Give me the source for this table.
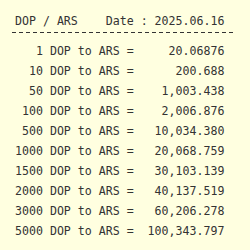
import React from "react";

type Row = {
  amount: number;
  value: string;
};

const rows: Row[] = [
  { amount: 1, value: "20.06876" },
  { amount: 10, value: "200.688" },
  { amount: 50, value: "1,003.438" },
  { amount: 100, value: "2,006.876" },
  { amount: 500, value: "10,034.380" },
  { amount: 1000, value: "20,068.759" },
  { amount: 1500, value: "30,103.139" },
  { amount: 2000, value: "40,137.519" },
  { amount: 3000, value: "60,206.278" },
  { amount: 5000, value: "100,343.797" },
];

const App: React.FC = () => {
  return (
    <div className="w-[250px] h-[250px] bg-[#FFFFE0] text-[#333333] font-['DejaVu_Sans_Mono',monospace] text-[11.6px] pt-[11px]">
      <div className="pl-[15px] h-[20px] leading-[20px] whitespace-pre">
        {"DOP / ARS    Date : 2025.06.16"}
      </div>

      <div className="ml-[12px] mt-[1px] w-[221px] h-px bg-[repeating-linear-gradient(to_right,#333333_0_4px,transparent_4px_7px)]" />

      <div className="mt-[8px] pl-[15px]">
        {rows.map((row) => (
          <div key={row.amount} className="h-[20px] leading-[20px] whitespace-pre">
            {`${String(row.amount).padStart(4, " ")} DOP to ARS = ${row.value.padStart(12, " ")}`}
          </div>
        ))}
      </div>
    </div>
  );
};

export default App;
